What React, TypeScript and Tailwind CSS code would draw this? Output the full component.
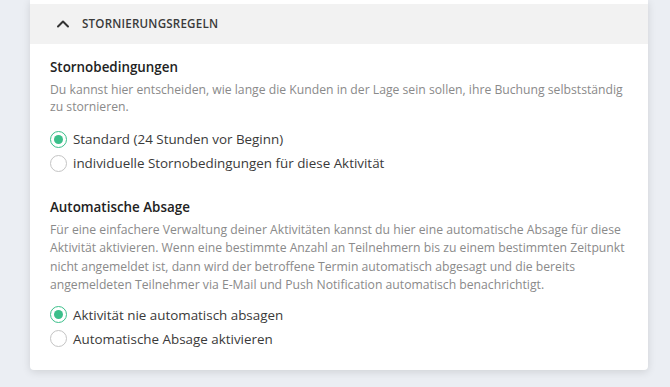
import { ChevronUp } from "lucide-react";

function Radio({ checked, label }: { checked?: boolean; label: string }) {
  return (
    <label className="flex h-6 items-center gap-[6px] text-[13.4px] text-[#3a3a3a]">
      <span
        className={
          checked
            ? "flex h-[17px] w-[17px] items-center justify-center rounded-full border-[1.5px] border-[#3bbf8a] bg-white"
            : "flex h-[17px] w-[17px] items-center justify-center rounded-full border-[1.5px] border-[#c4c4c4] bg-white"
        }
      >
        {checked && <span className="h-[9px] w-[9px] rounded-full bg-[#3bbf8a]" />}
      </span>
      <span>{label}</span>
    </label>
  );
}

export default function App() {
  return (
    <div
      className="h-[387px] w-[670px] overflow-hidden bg-[#ebeef3] pl-[30px] pr-[22px]"
      style={{ fontFamily: '"Open Sans", "Liberation Sans", sans-serif' }}
    >
      <div className="rounded-b-[4px] bg-white pt-[4px] pb-[19px] shadow-[0_2px_8px_rgba(0,0,0,0.12)]">
        <div className="flex h-[40px] items-center gap-[9px] bg-[#f2f2f2] pl-[23px]">
          <ChevronUp size={20} strokeWidth={2.4} className="text-[#333]" />
          <span className="text-[11.6px] font-semibold tracking-[0.2px] text-[#3a3a3a]">STORNIERUNGSREGELN</span>
        </div>

        <div className="pl-[20px] pr-[12px] pt-[13px]">
          <h3 className="text-[13.4px] font-semibold leading-[20px] text-[#222]">Stornobedingungen</h3>
          <p className="mt-[4px] text-[12.2px] leading-[17px] text-[#8a8a8a]">
            Du kannst hier entscheiden, wie lange die Kunden in der Lage sein sollen, ihre Buchung selbstständig zu stornieren.
          </p>
          <div className="mt-[12px] flex flex-col">
            <Radio checked label="Standard (24 Stunden vor Beginn)" />
            <Radio label="individuelle Stornobedingungen für diese Aktivität" />
          </div>

          <h3 className="mt-[22px] text-[13.4px] font-semibold leading-[20px] text-[#222]">Automatische Absage</h3>
          <p className="mt-[4px] text-[12.2px] leading-[18.4px] text-[#8a8a8a]">
            Für eine einfachere Verwaltung deiner Aktivitäten kannst du hier eine automatische Absage für diese Aktivität aktivieren. Wenn eine bestimmte Anzahl an Teilnehmern bis zu einem bestimmten Zeitpunkt nicht angemeldet ist, dann wird der betroffene Termin automatisch abgesagt und die bereits angemeldeten Teilnehmer via E-Mail und Push Notification automatisch benachrichtigt.
          </p>
          <div className="mt-[8px] flex flex-col">
            <Radio checked label="Aktivität nie automatisch absagen" />
            <Radio label="Automatische Absage aktivieren" />
          </div>
        </div>
      </div>
    </div>
  );
}
